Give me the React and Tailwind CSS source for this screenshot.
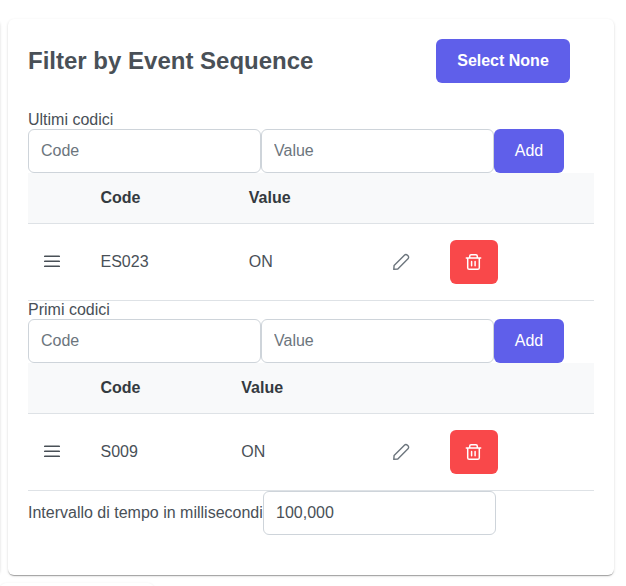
const CARD =
  'bg-white rounded-md shadow-[0_2px_1px_-1px_rgba(0,0,0,0.2),0_1px_1px_0_rgba(0,0,0,0.14),0_1px_3px_0_rgba(0,0,0,0.12)]';

const INPUT =
  'block h-11 w-[233px] shrink-0 rounded-md border border-[#ced4da] bg-white px-3 text-base text-[#495057] placeholder:text-[#6c757d] outline-none';

function BarsIcon() {
  return (
    <svg className="block size-4" viewBox="0 0 16 16" fill="none" stroke="#495057" strokeWidth="1.5" strokeLinecap="round">
      <path d="M.7 2.3h14.6M.7 7.3h14.6M.7 12.3h14.6" />
    </svg>
  );
}

function PencilIcon() {
  return (
    <svg className="block size-4 overflow-visible" viewBox="0 0 16 16" fill="none" stroke="#6c757d" strokeWidth="1.4" strokeLinejoin="round">
      <path d="M.8 15.4l.3-4L11.4 1.2a2.1 2.1 0 0 1 3 0l.6.6a2.1 2.1 0 0 1 0 3L4.8 15z" />
    </svg>
  );
}

function TrashIcon() {
  return (
    <svg className="block size-4 overflow-visible" viewBox="0 0 16 16" fill="none" stroke="white" strokeWidth="1.5" strokeLinecap="round" strokeLinejoin="round">
      <path d="M.3 4h14.4M1.7 4v9.7c0 1 .6 1.6 1.6 1.6h8.4c1 0 1.6-.6 1.6-1.6V4M3.7 3.8V2.2C3.7 1.3 4.3.8 5.1.8h4.8c.8 0 1.4.5 1.4 1.4v1.6M5.6 7.5v4.3M9.1 7.5v4.3" />
    </svg>
  );
}

function CodeSection({ label, code, value, columns }) {
  return (
    <section>
      <div className="h-[18px] leading-[18px]">{label}</div>
      <div className="flex">
        <input className={INPUT} placeholder="Code" />
        <input className={INPUT} placeholder="Value" />
        <button className="h-11 w-[70px] rounded-md bg-[#5f5fea] text-white">Add</button>
      </div>
      <div className={`grid h-[51px] items-center border-b border-[#dee2e6] bg-[#f8f9fa] pb-px font-bold text-[#343a40] ${columns}`}>
        <span />
        <span>Code</span>
        <span>Value</span>
      </div>
      <div className={`grid h-[77px] items-center border-b border-[#dee2e6] ${columns}`}>
        <span className="pl-4"><BarsIcon /></span>
        <span>{code}</span>
        <span>{value}</span>
        <span><PencilIcon /></span>
        <button className="flex h-11 w-12 items-center justify-center rounded-md bg-[#f9484a]">
          <TrashIcon />
        </button>
      </div>
    </section>
  );
}

export default function App() {
  return (
    <div className="h-[586px] w-[626px] overflow-hidden bg-white pt-[19px] font-['Liberation_Sans',Arial,sans-serif] text-base text-[#495057]">
      <div className="flex h-[556px]">
        <div className={`-ml-5 w-5 shrink-0 ${CARD}`} />
        <main className={`ml-2 w-[606px] shrink-0 p-5 ${CARD}`}>
          <header className="flex h-11 items-center">
            <h2 className="w-[408px] text-2xl font-bold">Filter by Event Sequence</h2>
            <button className="h-11 w-[134px] rounded-md bg-[#5f5fea] font-bold text-white">Select None</button>
          </header>
          <div className="mt-7">
            <CodeSection label="Ultimi codici" code="ES023" value="ON" columns="grid-cols-[72.5px_148.3px_144.7px_56.5px_48px]" />
            <CodeSection label="Primi codici" code="S009" value="ON" columns="grid-cols-[72.5px_140.8px_152.2px_56.5px_48px]" />
          </div>
          <div className="flex items-center">
            <label className="w-[235px] shrink-0 whitespace-nowrap">Intervallo di tempo in millisecondi</label>
            <input className={INPUT} defaultValue="100,000" />
          </div>
        </main>
      </div>
      <div className={`mt-2 h-10 w-[154px] ${CARD}`} />
    </div>
  );
}
